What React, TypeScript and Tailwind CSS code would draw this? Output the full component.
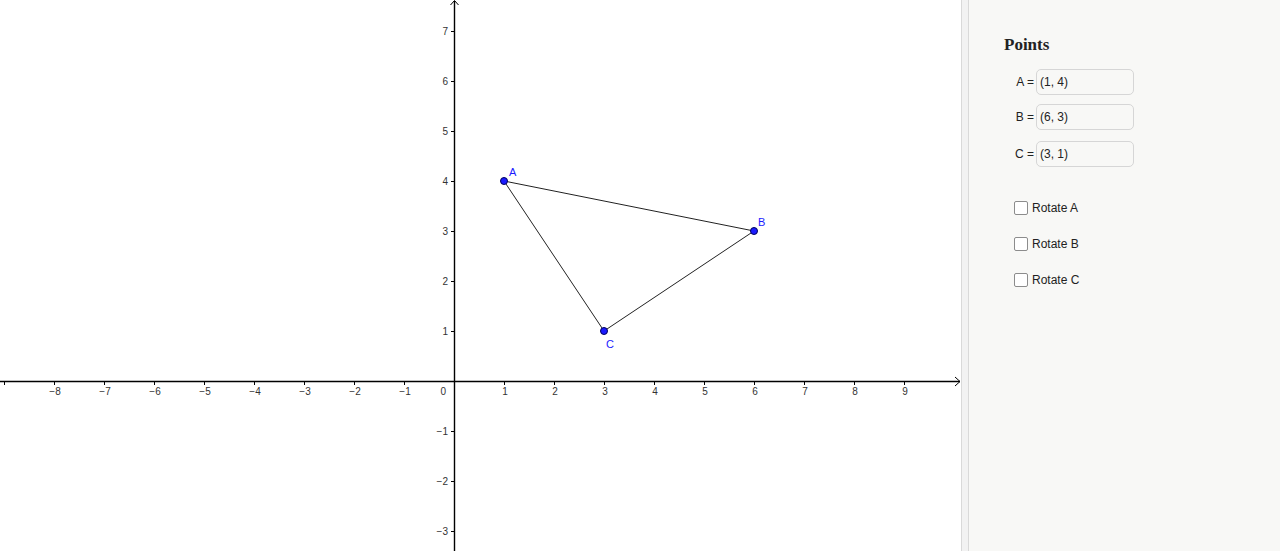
import React from "react";

const UNIT = 50;
const OX = 454;
const OY = 381;

const px = (x: number) => OX + x * UNIT;
const py = (y: number) => OY - y * UNIT;

const points = [
  { name: "A", x: 1, y: 4, lx: 509, ly: 176 },
  { name: "B", x: 6, y: 3, lx: 758, ly: 226 },
  { name: "C", x: 3, y: 1, lx: 606, ly: 348 },
];

const xTicks = [-9, -8, -7, -6, -5, -4, -3, -2, -1, 1, 2, 3, 4, 5, 6, 7, 8, 9];
const yTicks = [7, 6, 5, 4, 3, 2, 1, -1, -2, -3];

const label = (n: number) => (n < 0 ? `\u2212${-n}` : `${n}`);

const Graph = () => {
  const [a, b, c] = points;
  return (
    <svg width={961} height={551} className="block" style={{ fontFamily: '"Liberation Sans", Arial, sans-serif' }}>
      {/* axes */}
      <line x1={0} y1={OY + 0.5} x2={960} y2={OY + 0.5} stroke="#000" strokeWidth={1.4} />
      <line x1={OX + 0.5} y1={1} x2={OX + 0.5} y2={551} stroke="#000" strokeWidth={1.4} />
      <polyline points="955,377 960,381.5 955,386" fill="none" stroke="#000" strokeWidth={1} />
      <polyline points="450.5,5 454.5,0.5 458.5,5" fill="none" stroke="#000" strokeWidth={1} />

      {xTicks.map((t) => (
        <g key={`x${t}`}>
          <line x1={px(t) + 0.5} y1={OY} x2={px(t) + 0.5} y2={OY + 4} stroke="#000" strokeWidth={1} />
          {t > -9 && (
            <text x={px(t) + 1} y={395} fontSize={10} fill="#333" textAnchor="middle">
              {label(t)}
            </text>
          )}
        </g>
      ))}
      <text x={446} y={395} fontSize={10} fill="#333" textAnchor="end">
        0
      </text>

      {yTicks.map((t) => (
        <g key={`y${t}`}>
          <line x1={OX - 3} y1={py(t) + 0.5} x2={OX} y2={py(t) + 0.5} stroke="#000" strokeWidth={1} />
          <text x={448} y={py(t) + 4} fontSize={10} fill="#333" textAnchor="end">
            {label(t)}
          </text>
        </g>
      ))}

      {/* triangle */}
      <polygon
        points={`${px(a.x)},${py(a.y)} ${px(b.x)},${py(b.y)} ${px(c.x)},${py(c.y)}`}
        fill="none"
        stroke="#222"
        strokeWidth={1}
      />

      {points.map((p) => (
        <g key={p.name}>
          <circle cx={px(p.x)} cy={py(p.y)} r={3.5} fill="#1a1aff" stroke="#00005a" strokeWidth={1} />
          <text x={p.lx} y={p.ly} fontSize={11} fill="#1a1aff">
            {p.name}
          </text>
        </g>
      ))}
    </svg>
  );
};

const PointRow = ({ name, value, className }: { name: string; value: string; className: string }) => (
  <div className={`flex items-center ${className}`}>
    <span className="w-[32px] pr-[2px] text-right text-[12px] text-[#222]">{name} =</span>
    <div className="flex h-[26px] w-[98px] items-center rounded-[5px] border border-[#d6d6d6] bg-[#f8f8f6] pl-[3px] text-[12px] text-[#222]">
      {value}
    </div>
  </div>
);

const Check = ({ text, className }: { text: string; className: string }) => (
  <label className={`flex items-center gap-[4px] ${className}`}>
    <span className="h-[14px] w-[14px] rounded-[2px] border-[1.5px] border-[#8c8c8c] bg-white" />
    <span className="text-[12px] text-[#222]">{text}</span>
  </label>
);

export default function App() {
  return (
    <div className="flex h-[551px] w-full overflow-hidden bg-white" style={{ fontFamily: '"Liberation Sans", Arial, sans-serif' }}>
      <div className="w-[961px] shrink-0">
        <Graph />
      </div>
      <div className="w-[8px] shrink-0 border-x border-[#d9d9d9] bg-[#f2f2f2]" />
      <div className="flex flex-1 flex-col bg-[#f8f8f6] pl-[35px] pt-[35px]">
        <div className="text-[17px] font-bold leading-[20px] text-[#222]" style={{ fontFamily: '"Liberation Serif", "Times New Roman", serif' }}>
          Points
        </div>
        <PointRow name="A" value="(1, 4)" className="mt-[14px]" />
        <PointRow name="B" value="(6, 3)" className="mt-[9px]" />
        <PointRow name="C" value="(3, 1)" className="mt-[11px]" />
        <div className="ml-[10px] mt-[34px] flex flex-col">
          <Check text="Rotate A" className="h-[14px]" />
          <Check text="Rotate B" className="mt-[22px] h-[14px]" />
          <Check text="Rotate C" className="mt-[22px] h-[14px]" />
        </div>
      </div>
    </div>
  );
}
